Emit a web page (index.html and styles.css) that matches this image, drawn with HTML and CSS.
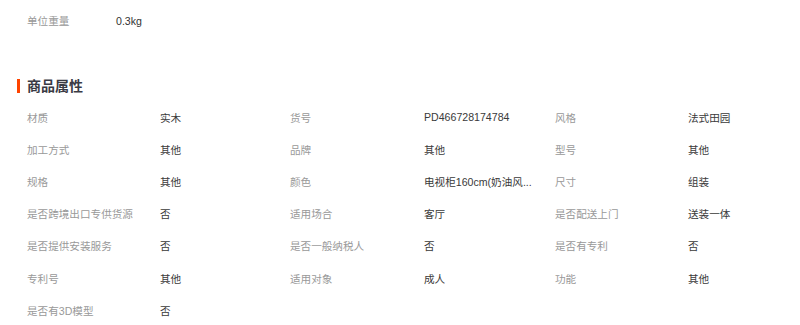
FILE: index.html
```html
<!DOCTYPE html>
<html lang="zh-CN">
<head>
<meta charset="utf-8">
<title>商品属性</title>
<link rel="stylesheet" href="styles.css">
</head>
<body>
<div class="weight">
  <span class="weight-label">单位重量</span>
  <span class="weight-value">0.3kg</span>
</div>
<h3 class="section-title">商品属性</h3>
<div class="attrs">
  <span class="k">材质</span><span class="v">实木</span>
  <span class="k">货号</span><span class="v">PD466728174784</span>
  <span class="k">风格</span><span class="v">法式田园</span>

  <span class="k">加工方式</span><span class="v">其他</span>
  <span class="k">品牌</span><span class="v">其他</span>
  <span class="k">型号</span><span class="v">其他</span>

  <span class="k">规格</span><span class="v">其他</span>
  <span class="k">颜色</span><span class="v">电视柜160cm(奶油风...</span>
  <span class="k">尺寸</span><span class="v">组装</span>

  <span class="k">是否跨境出口专供货源</span><span class="v">否</span>
  <span class="k">适用场合</span><span class="v">客厅</span>
  <span class="k">是否配送上门</span><span class="v">送装一体</span>

  <span class="k">是否提供安装服务</span><span class="v">否</span>
  <span class="k">是否一般纳税人</span><span class="v">否</span>
  <span class="k">是否有专利</span><span class="v">否</span>

  <span class="k">专利号</span><span class="v">其他</span>
  <span class="k">适用对象</span><span class="v">成人</span>
  <span class="k">功能</span><span class="v">其他</span>

  <span class="k">是否有3D模型</span><span class="v">否</span>
</div>
</body>
</html>
```

FILE: styles.css
```css
html, body {
  margin: 0;
  padding: 0;
  background: #fff;
}
body {
  font-family: "Liberation Sans", "Noto Sans CJK SC", sans-serif;
  font-size: 10.6px;
  color: #333;
}
.weight {
  display: flex;
  padding: 11px 0 0 27px;
  line-height: 20px;
}
.weight-label {
  width: 89px;
  color: #999;
}
.weight-value {
  color: #333;
}
.section-title {
  margin: 48px 0 0 17px;
  padding-left: 7px;
  border-left: 3px solid #ff4400;
  font-size: 14px;
  line-height: 14px;
  height: 14px;
  font-weight: bold;
  color: #3a3a44;
}
.attrs {
  display: grid;
  grid-template-columns: 133px 130px 134px 131px 133px 1fr;
  grid-auto-rows: 32.2px;
  align-items: center;
  padding: 0 0 0 27px;
  margin-top: 8px;
}
.k {
  color: #999;
  white-space: nowrap;
}
.v {
  color: #3a3a3a;
  white-space: nowrap;
}
```
